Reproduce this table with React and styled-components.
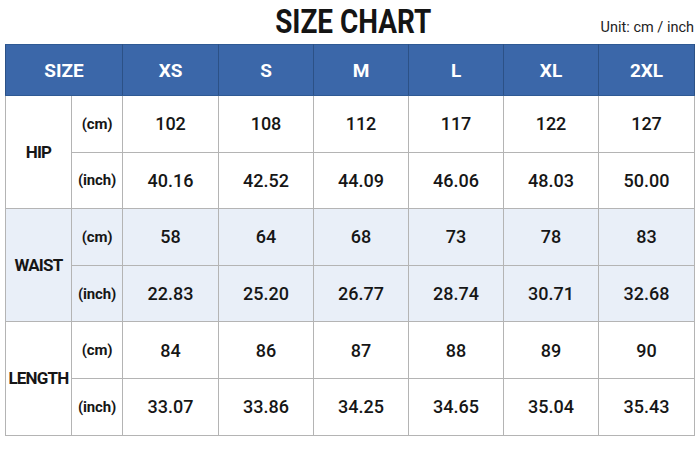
import React from "react";
import styled, { createGlobalStyle } from "styled-components";

const sizes = ["XS", "S", "M", "L", "XL", "2XL"];
const colWidths = [66, 51, 96, 95, 95, 95, 95, 96];

const groups = [
  { name: "HIP", cm: ["102", "108", "112", "117", "122", "127"], inch: ["40.16", "42.52", "44.09", "46.06", "48.03", "50.00"] },
  { name: "WAIST", cm: ["58", "64", "68", "73", "78", "83"], inch: ["22.83", "25.20", "26.77", "28.74", "30.71", "32.68"], shaded: true },
  { name: "LENGTH", cm: ["84", "86", "87", "88", "89", "90"], inch: ["33.07", "33.86", "34.25", "34.65", "35.04", "35.43"] },
];

const GlobalStyle = createGlobalStyle`
  html, body { margin: 0; padding: 0; background: #fff; }
  body { font-family: "Roboto", "Liberation Sans", sans-serif; color: #1a1a1a; }
`;

const Page = styled.div`
  width: 700px;
  height: 456px;
  padding: 0 6px 0 5px;
  box-sizing: border-box;
`;

const TitleBar = styled.div`
  height: 44px;
  display: grid;
  grid-template-columns: 1fr auto 1fr;
  align-items: start;
`;

const Title = styled.h1`
  grid-column: 2;
  margin: 0;
  padding-top: 1px;
  font-size: 34px;
  font-weight: 700;
  line-height: 40px;
  color: #141414;
  transform: translateX(4px) scaleX(0.82);
`;

const Unit = styled.div`
  grid-column: 3;
  justify-self: end;
  align-self: end;
  padding-bottom: 8px;
  font-size: 14.5px;
  color: #222;
`;

const Table = styled.table`
  width: 689px;
  border-collapse: collapse;
  table-layout: fixed;
  border: 1px solid #a9a9a9;
`;

const Col = styled.col`
  width: ${(p) => p.$w}px;
`;

const Head = styled.th`
  height: 50px;
  padding: 0;
  background: #3b67a9;
  color: #fff;
  font-size: 19px;
  font-weight: 700;
  border-left: 1px solid #2c5186;
  border-right: 1px solid #2c5186;
  border-top: 1px solid #2f5a94;
  border-bottom: 1px solid #2f5a94;
`;

const Cell = styled.td`
  height: 55.6px;
  padding: 0;
  text-align: center;
  border: 1px solid #b4b4b4;
  background: ${(p) => (p.$shaded ? "#e9eff8" : "#fff")};
  font-size: 18px;
  font-weight: 500;
  color: #161616;
`;

const LabelCell = styled(Cell)`
  font-size: 17px;
  font-weight: 700;
  letter-spacing: -0.8px;
  white-space: nowrap;
`;

const UnitCell = styled(Cell)`
  font-size: 15px;
  font-weight: 700;
  letter-spacing: -0.2px;
`;

export default function App() {
  return (
    <>
      <GlobalStyle />
      <Page>
        <TitleBar>
          <Title>SIZE CHART</Title>
          <Unit>Unit: cm / inch</Unit>
        </TitleBar>
        <Table>
          <colgroup>
            {colWidths.map((w, i) => (
              <Col key={i} $w={w} />
            ))}
          </colgroup>
          <thead>
            <tr>
              <Head colSpan={2}>SIZE</Head>
              {sizes.map((s) => (
                <Head key={s}>{s}</Head>
              ))}
            </tr>
          </thead>
          <tbody>
            {groups.map((g) => (
              <React.Fragment key={g.name}>
                <tr>
                  <LabelCell $shaded={g.shaded} rowSpan={2}>
                    {g.name}
                  </LabelCell>
                  <UnitCell $shaded={g.shaded}>(cm)</UnitCell>
                  {g.cm.map((v, i) => (
                    <Cell key={i} $shaded={g.shaded}>{v}</Cell>
                  ))}
                </tr>
                <tr>
                  <UnitCell $shaded={g.shaded}>(inch)</UnitCell>
                  {g.inch.map((v, i) => (
                    <Cell key={i} $shaded={g.shaded}>{v}</Cell>
                  ))}
                </tr>
              </React.Fragment>
            ))}
          </tbody>
        </Table>
      </Page>
    </>
  );
}
